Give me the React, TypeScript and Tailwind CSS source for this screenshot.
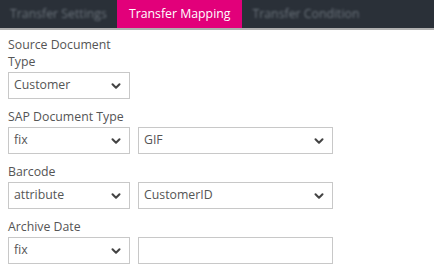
import { ChevronDown } from 'lucide-react';

function Select({ value, className = '' }: { value: string; className?: string }) {
  return (
    <div
      className={`flex h-[27px] items-center justify-between border border-[#c8c8c8] bg-white pl-[5px] pr-[6px] text-[12.3px] text-[#555] ${className}`}
    >
      <span>{value}</span>
      <ChevronDown size={14} strokeWidth={3.5} className="text-[#444]" />
    </div>
  );
}

function Field({ label, children }: { label: React.ReactNode; children: React.ReactNode }) {
  return (
    <div className="mb-[9px]">
      <div className="mb-[2px] text-[12.3px] leading-[17px] text-[#555]">{label}</div>
      <div className="flex gap-2">{children}</div>
    </div>
  );
}

export default function App() {
  const tabs = ['Transfer Settings', 'Transfer Mapping', 'Transfer Condition'];
  const activeTab = 'Transfer Mapping';

  return (
    <div className="h-[270px] w-[434px] bg-white font-['Open_Sans',sans-serif]">
      <nav className="flex h-[30px] border-b-2 border-[#b0b0b0] bg-[#2a3038]">
        {tabs.map((tab) => (
          <div
            key={tab}
            className={`flex items-center px-[10px] text-[12.3px] ${
              tab === activeTab ? 'bg-[#e2007a] px-[12px] text-white' : 'text-[#6b737b] blur-[1px]'
            }`}
          >
            {tab}
          </div>
        ))}
      </nav>

      <div className="px-2 pt-[6px]">
        <Field
          label={
            <>
              Source Document
              <br />
              Type
            </>
          }
        >
          <Select value="Customer" className="w-[122px]" />
        </Field>
        <Field label="SAP Document Type">
          <Select value="fix" className="w-[122px]" />
          <Select value="GIF" className="w-[195px]" />
        </Field>
        <Field label="Barcode">
          <Select value="attribute" className="w-[122px]" />
          <Select value="CustomerID" className="w-[195px]" />
        </Field>
        <Field label="Archive Date">
          <Select value="fix" className="w-[122px]" />
          <div className="h-[27px] w-[195px] border border-[#c8c8c8] bg-white" />
        </Field>
      </div>
    </div>
  );
}
